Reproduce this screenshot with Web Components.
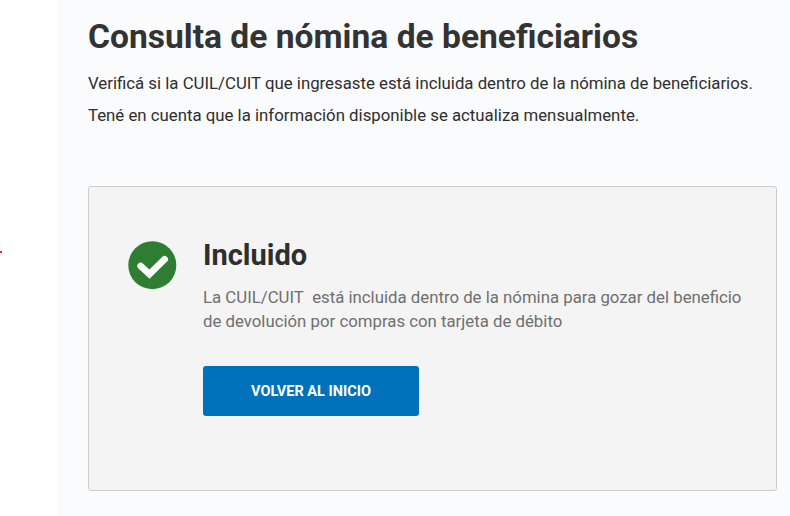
<!DOCTYPE html>
<html lang="es">
<head>
<meta charset="utf-8">
<title>Consulta de nómina</title>
<style>
  html, body { margin: 0; height: 516px; overflow: hidden; background: #fff; font-family: Roboto, "Liberation Sans", sans-serif; }
  body { display: flex; }
</style>
</head>
<body>
<side-gutter></side-gutter>
<nomina-page>
  <span slot="title">Consulta de nómina de beneficiarios</span>
  <span slot="line1">Verificá si la CUIL/CUIT que ingresaste está incluida dentro de la nómina de beneficiarios.</span>
  <span slot="line2">Tené en cuenta que la información disponible se actualiza mensualmente.</span>
  <result-card heading="Incluido" action="VOLVER AL INICIO">La CUIL/CUIT&nbsp; está incluida dentro de la nómina para gozar del beneficio de devolución por compras con tarjeta de débito</result-card>
</nomina-page>
<script>
(function () {
  class SideGutter extends HTMLElement {
    constructor() {
      super();
      this.attachShadow({ mode: 'open' }).innerHTML = [
        '<style>',
        ':host{display:block;flex:0 0 57px;position:relative;background:#fff;}',
        '.dot{position:absolute;left:0;top:251px;width:2px;height:2px;background:#f02a2a;}',
        '</style>',
        '<div class="dot"></div>'
      ].join('');
    }
  }

  class NominaPage extends HTMLElement {
    constructor() {
      super();
      this.attachShadow({ mode: 'open' }).innerHTML = [
        '<style>',
        ':host{display:block;flex:1;background:#fafbfd;padding:18px 13px 0 31px;color:#2e2e2e;}',
        'h1{margin:0;font-size:33.6px;line-height:38px;font-weight:700;color:#333;}',
        'p{margin:0;font-size:16.8px;line-height:24px;color:#2e2e2e;}',
        '.l1{margin-top:15px;}',
        '.l2{margin-top:8px;}',
        '.body{margin-top:59px;}',
        '</style>',
        '<h1><slot name="title"></slot></h1>',
        '<p class="l1"><slot name="line1"></slot></p>',
        '<p class="l2"><slot name="line2"></slot></p>',
        '<div class="body"><slot></slot></div>'
      ].join('');
    }
  }

  class ResultCard extends HTMLElement {
    constructor() {
      super();
      this.attachShadow({ mode: 'open' }).innerHTML = [
        '<style>',
        ':host{display:block;box-sizing:border-box;height:305px;background:#f4f4f4;border:1px solid #ccc;border-radius:3px;padding:50px 32px 0 39px;}',
        '.row{display:flex;gap:26px;}',
        '.icon{flex:0 0 49px;width:49px;height:49px;margin-top:4px;}',
        'svg{display:block;}',
        'h2{margin:0;font-size:29px;line-height:36px;font-weight:700;color:#2e2e2e;}',
        '.text{margin-top:12px;font-size:16.8px;line-height:24px;color:#6f6f6f;}',
        'button{display:block;margin-top:33px;width:216px;height:50px;border:0;border-radius:3px;background:#0072bb;color:#fff;font:700 14.5px Roboto,"Liberation Sans",sans-serif;}',
        '</style>',
        '<div class="row">',
        '<div class="icon"><svg width="49" height="49" viewBox="0 0 49 49"><circle cx="24.3" cy="24.2" r="24" fill="#2e7d33"/><path d="M12.6 25l8.9 8.2 15.2-15" fill="none" stroke="#fff" stroke-width="6.6" stroke-linecap="round"/></svg></div>',
        '<div><h2></h2><div class="text"><slot></slot></div><button type="button"></button></div>',
        '</div>'
      ].join('');
      this.shadowRoot.querySelector('h2').textContent = this.getAttribute('heading');
      this.shadowRoot.querySelector('button').textContent = this.getAttribute('action');
    }
  }

  customElements.define('side-gutter', SideGutter);
  customElements.define('nomina-page', NominaPage);
  customElements.define('result-card', ResultCard);
})();
</script>
</body>
</html>
